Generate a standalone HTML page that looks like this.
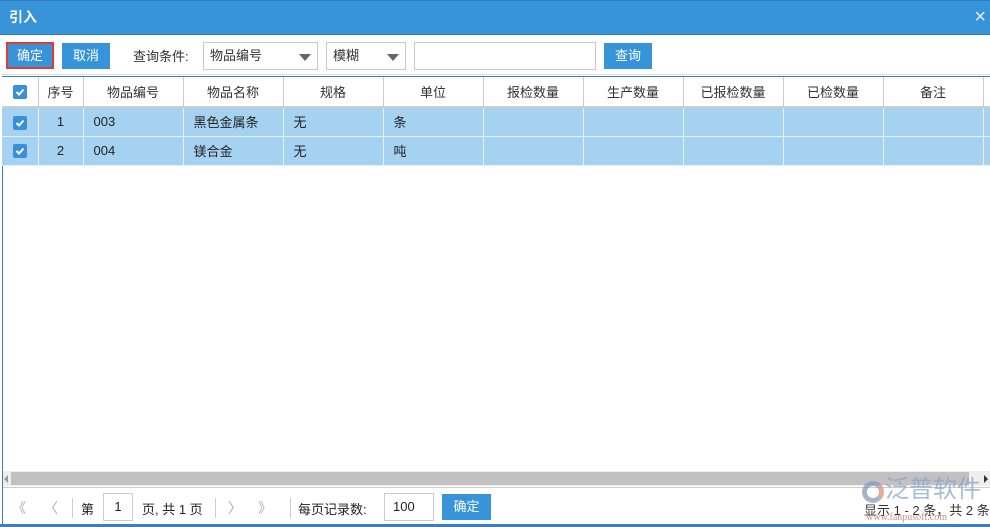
<!DOCTYPE html>
<html><head><meta charset="utf-8"><style>
*{margin:0;padding:0;box-sizing:border-box}
html,body{width:990px;height:527px;overflow:hidden}
body{background:#fff;font-family:"Liberation Sans","Noto Sans CJK SC",sans-serif;font-size:13px;color:#222;position:relative}
.a{position:absolute;white-space:nowrap}
.title{left:0;top:0;width:990px;height:35px;background:#3894d8;border-top:1px solid #2f7fc0;border-bottom:1px solid #2f7bbd;color:#fff;font-weight:bold;font-size:14px;line-height:33px;padding-left:9px}
.btn{background:#3894d8;color:#fff;text-align:center;font-size:13px}
.sel{border:1px solid #c8c8c8;background:#fff;color:#333;padding-left:6px}
.tri{position:absolute;right:6px;top:11px;width:0;height:0;border-left:6px solid transparent;border-right:6px solid transparent;border-top:7px solid #666}
.grid{left:2px;top:76px;width:988px;height:411px;border-left:1px solid #3a7fc1;border-top:1px solid #3a7fc1}
table{border-collapse:collapse;position:absolute;left:2px;top:77px;table-layout:fixed;width:1091px}
td{border-right:1px solid #ccc;border-bottom:1px solid #ddd;height:29px;font-size:13px;padding:0 10px;white-space:nowrap;overflow:hidden}
tr.h td{height:30px;text-align:center;color:#333;border-bottom:2px solid #ccc;background:#fff}
tr.r td{background:#a6d2f2;border-right:1px solid #e6f0f8;border-bottom:1px solid #e6f0f8}
.cb{display:inline-block;width:14px;height:14px;background:#3a8fd9;border-radius:2px;vertical-align:middle;position:relative}
.cb svg{position:absolute;left:2px;top:2px}
.pg{color:#aaa;font-size:14px}
</style></head><body>
<div class="a title">引入<span class="a" style="right:4px;top:0;font-weight:normal;font-size:20px;color:#dfeefa">×</span></div>
<div class="a btn" style="left:6px;top:42px;width:48px;height:27px;border:2px solid #e53935;line-height:23px">确定</div>
<div class="a btn" style="left:62px;top:43px;width:48px;height:26px;line-height:26px">取消</div>
<div class="a" style="left:133px;top:46px;color:#333">查询条件:</div>
<div class="a sel" style="left:203px;top:42px;width:115px;height:28px;line-height:26px">物品编号<span class="tri"></span></div>
<div class="a sel" style="left:326px;top:42px;width:80px;height:28px;line-height:26px">模糊<span class="tri"></span></div>
<div class="a sel" style="left:414px;top:42px;width:182px;height:28px"></div>
<div class="a btn" style="left:604px;top:43px;width:48px;height:26px;line-height:26px">查询</div>
<div class="a" style="left:2px;top:74px;width:988px;height:1px;background:#ddd"></div>
<div class="a grid"></div>
<table>
<colgroup><col style="width:36px"><col style="width:45px"><col style="width:100px"><col style="width:100px"><col style="width:100px"><col style="width:100px"><col style="width:100px"><col style="width:100px"><col style="width:100px"><col style="width:100px"><col style="width:100px"><col style="width:110px"></colgroup>
<tr class="h"><td style="padding:0"><span class="cb"><svg width="10" height="10"><path d="M1.5 5L4 7.5L8.5 2.5" stroke="#fff" stroke-width="2" fill="none"/></svg></span></td><td style="padding:0">序号</td><td>物品编号</td><td>物品名称</td><td>规格</td><td>单位</td><td>报检数量</td><td>生产数量</td><td>已报检数量</td><td>已检数量</td><td>备注</td><td></td></tr>
<tr class="r"><td style="padding:0;text-align:center"><span class="cb"><svg width="10" height="10"><path d="M1.5 5L4 7.5L8.5 2.5" stroke="#fff" stroke-width="2" fill="none"/></svg></span></td><td style="text-align:center;padding:0">1</td><td>003</td><td>黑色金属条</td><td>无</td><td>条</td><td></td><td></td><td></td><td></td><td></td><td></td></tr>
<tr class="r"><td style="padding:0;text-align:center"><span class="cb"><svg width="10" height="10"><path d="M1.5 5L4 7.5L8.5 2.5" stroke="#fff" stroke-width="2" fill="none"/></svg></span></td><td style="text-align:center;padding:0">2</td><td>004</td><td>镁合金</td><td>无</td><td>吨</td><td></td><td></td><td></td><td></td><td></td><td></td></tr>
</table>
<div class="a" style="left:3px;top:471px;width:987px;height:15px;background:#eee"></div>
<div class="a" style="left:11px;top:472px;width:958px;height:13px;background:#c1c1c1"></div>
<div class="a" style="left:4px;top:475px;border-top:4px solid transparent;border-bottom:4px solid transparent;border-right:4px solid #999"></div>
<div class="a" style="left:984px;top:475px;border-top:4px solid transparent;border-bottom:4px solid transparent;border-left:4px solid #333"></div>
<div class="a" style="left:2px;top:487px;width:988px;height:1px;background:#ccc"></div>
<div class="a" style="left:2px;top:487px;width:1px;height:40px;background:#3a7fc1"></div>
<div class="a pg" style="left:12px;top:498px">《</div>
<div class="a pg" style="left:44px;top:498px">〈</div>
<div class="a" style="left:72px;top:498px;width:1px;height:20px;background:#ccc"></div>
<div class="a" style="left:81px;top:499px">第</div>
<div class="a" style="left:103px;top:493px;width:30px;height:28px;border:1px solid #ccc;text-align:center;line-height:26px">1</div>
<div class="a" style="left:142px;top:499px">页, 共 1 页</div>
<div class="a" style="left:215px;top:498px;width:1px;height:20px;background:#ccc"></div>
<div class="a pg" style="left:228px;top:498px">〉</div>
<div class="a pg" style="left:258px;top:498px">》</div>
<div class="a" style="left:290px;top:498px;width:1px;height:20px;background:#ccc"></div>
<div class="a" style="left:298px;top:499px">每页记录数:</div>
<div class="a" style="left:384px;top:493px;width:50px;height:28px;border:1px solid #ccc;line-height:26px;padding-left:8px">100</div>
<div class="a btn" style="left:442px;top:494px;width:49px;height:26px;line-height:26px">确定</div>
<div class="a" style="left:864px;top:500px;color:#333">显示 1 - 2 条，共 2 条</div>
<div class="a" style="left:885px;top:475px;font-size:24px;line-height:30px;color:#8aa3c8;opacity:.75">泛普软件</div>
<div class="a" style="left:862px;top:481px;width:22px;height:22px;border-radius:50%;border:5px solid #7f97bd;border-right-color:#d98a6a;opacity:.7"></div>
<div class="a" style="left:866px;top:512px;font-size:10px;color:#c0604a;opacity:.7;font-family:'Liberation Serif',serif">www.fanpusoft.com</div>
<div class="a" style="left:0;top:524px;width:990px;height:3px;background:#3a7fc1"></div>
</body></html>
